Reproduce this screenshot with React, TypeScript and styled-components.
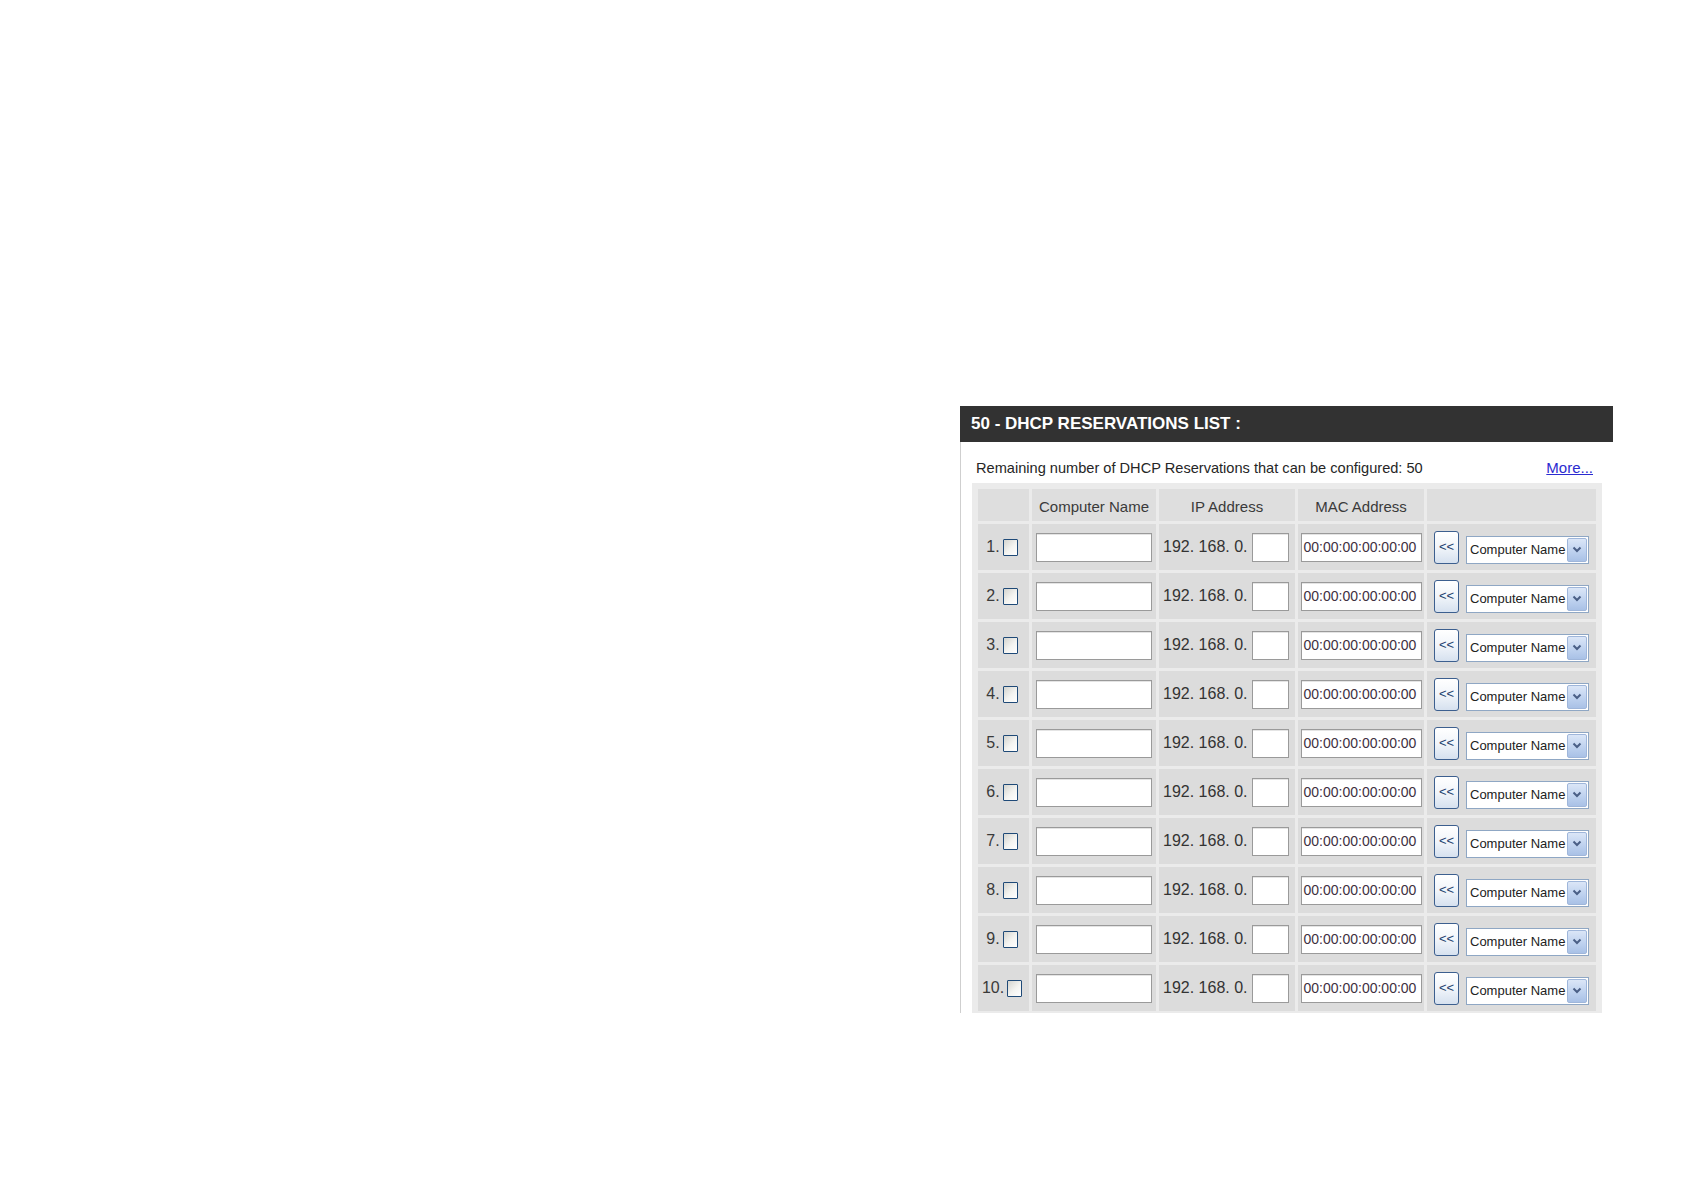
import React from "react";
import styled, { createGlobalStyle } from "styled-components";

const GlobalStyle = createGlobalStyle`
  html, body { margin: 0; padding: 0; background: #ffffff; }
  body { font-family: "Liberation Sans", Arial, sans-serif; }
`;

const FONT = `"Liberation Sans", Arial, sans-serif`;

const Page = styled.div`
  width: 1684px;
  height: 1190px;
  box-sizing: border-box;
  display: flex;
  justify-content: flex-end;
  align-items: flex-start;
  padding: 406px 71px 0 0;
`;

const Panel = styled.section`
  width: 653px;
  height: 607px;
  overflow: hidden;
  display: flex;
  flex-direction: column;
`;

const Header = styled.h2`
  margin: 0;
  flex: none;
  height: 36px;
  background: #323232;
  color: #ffffff;
  font: bold 17px/36px ${FONT};
  padding-left: 11px;
  white-space: pre;
`;

const Body = styled.div`
  flex: 1;
  border-left: 1px solid #cfcfcf;
  padding: 0 11px;
`;

const Info = styled.div`
  display: flex;
  justify-content: space-between;
  align-items: center;
  height: 20px;
  margin: 16px 0 5px;
  padding: 0 9px 0 4px;
  font: 14.6px/20px ${FONT};
  color: #262626;
`;

const MoreLink = styled.a`
  color: #2b2bd0;
  text-decoration: underline;
  font: 15px/20px ${FONT};
`;

const Table = styled.table`
  width: 630px;
  table-layout: fixed;
  border-collapse: separate;
  border-spacing: 3px;
  padding: 3px;
  background: #ebebeb;
`;

const HeadCell = styled.th<{ $w: number }>`
  width: ${(p) => p.$w}px;
  height: 32px;
  padding: 3px 0 0;
  box-sizing: border-box;
  background: #dedede;
  font: normal 15px/29px ${FONT};
  color: #3a3a3a;
  text-align: center;
`;

const Cell = styled.td`
  height: 46px;
  padding: 0;
  background: #dcdcdc;
  vertical-align: middle;
`;

const NumBox = styled.div`
  display: flex;
  align-items: center;
  justify-content: center;
  gap: 3px;
  padding-right: 3px;
  font: 16px ${FONT};
  color: #3a3a3a;
`;

const CheckBox = styled.span`
  display: inline-block;
  width: 15px;
  height: 17px;
  box-sizing: border-box;
  border: 1px solid #1f4a78;
  border-radius: 1px;
  background: linear-gradient(135deg, #d4d4cf 0%, #f4f4f1 55%, #ffffff 100%);
`;

const CenterBox = styled.div`
  display: flex;
  align-items: center;
  justify-content: center;
`;

const TextField = styled.div<{ $w: number }>`
  width: ${(p) => p.$w}px;
  height: 29px;
  box-sizing: border-box;
  border: 1px solid #9a9a9a;
  box-shadow: inset 0 1px 0 #e4e4e4;
  background: #ffffff;
  display: flex;
  align-items: center;
  padding-left: 2px;
  font: 14px ${FONT};
  color: #40303f;
  white-space: nowrap;
  overflow: hidden;
`;

const IpBox = styled.div`
  display: flex;
  align-items: center;
  gap: 4px;
  padding-left: 4px;
  font: 16px ${FONT};
  color: #333333;
  white-space: pre;
`;

const ActionBox = styled.div`
  display: flex;
  align-items: flex-end;
  gap: 7px;
  padding-left: 7px;
`;

const CopyButton = styled.button`
  width: 25px;
  height: 33px;
  padding: 0 0 2px;
  box-sizing: border-box;
  border: 1px solid #3c5f8f;
  border-radius: 3px;
  background: linear-gradient(#ffffff 0%, #f1f5fa 50%, #d6e1ef 100%);
  font: 13px ${FONT};
  color: #23416e;
  display: flex;
  align-items: center;
  justify-content: center;
`;

const Select = styled.div`
  width: 123px;
  height: 28px;
  box-sizing: border-box;
  border: 1px solid #8fa7c4;
  background: #ffffff;
  display: flex;
  align-items: stretch;
`;

const SelectLabel = styled.span`
  flex: 1;
  display: flex;
  align-items: center;
  padding-left: 3px;
  font: 13px ${FONT};
  color: #222222;
  white-space: nowrap;
  overflow: hidden;
`;

const ArrowBox = styled.span`
  width: 18px;
  margin: 1px;
  border: 1px solid #9fb6da;
  border-radius: 2px;
  background: linear-gradient(#dbe6f7 0%, #bcd0ee 60%, #a9c1e6 100%);
  display: flex;
  align-items: center;
  justify-content: center;
`;

const columns = [
  { w: 51, label: "" },
  { w: 124, label: "Computer Name" },
  { w: 136, label: "IP Address" },
  { w: 126, label: "MAC Address" },
  { w: 169, label: "" },
];

const rows = Array.from({ length: 10 }, (_, i) => i + 1);

const Chevron = () => (
  <svg width="10" height="7" viewBox="0 0 10 7">
    <polyline points="1.5,1.5 5,5 8.5,1.5" fill="none" stroke="#4a5f86" strokeWidth="2" />
  </svg>
);

export default function App() {
  return (
    <>
      <GlobalStyle />
      <Page>
        <Panel>
          <Header>50 - DHCP RESERVATIONS LIST :</Header>
          <Body>
            <Info>
              <span>Remaining number of DHCP Reservations that can be configured: 50</span>
              <MoreLink href="#">More...</MoreLink>
            </Info>
            <Table>
              <thead>
                <tr>
                  {columns.map((c, i) => (
                    <HeadCell key={i} $w={c.w}>
                      {c.label}
                    </HeadCell>
                  ))}
                </tr>
              </thead>
              <tbody>
                {rows.map((n) => (
                  <tr key={n}>
                    <Cell>
                      <NumBox>
                        <span>{n}.</span>
                        <CheckBox />
                      </NumBox>
                    </Cell>
                    <Cell>
                      <CenterBox>
                        <TextField $w={116} />
                      </CenterBox>
                    </Cell>
                    <Cell>
                      <IpBox>
                        <span>192. 168. 0.</span>
                        <TextField $w={37} />
                      </IpBox>
                    </Cell>
                    <Cell>
                      <CenterBox>
                        <TextField $w={121}>00:00:00:00:00:00</TextField>
                      </CenterBox>
                    </Cell>
                    <Cell>
                      <ActionBox>
                        <CopyButton>&lt;&lt;</CopyButton>
                        <Select>
                          <SelectLabel>Computer Name</SelectLabel>
                          <ArrowBox>
                            <Chevron />
                          </ArrowBox>
                        </Select>
                      </ActionBox>
                    </Cell>
                  </tr>
                ))}
              </tbody>
            </Table>
          </Body>
        </Panel>
      </Page>
    </>
  );
}
